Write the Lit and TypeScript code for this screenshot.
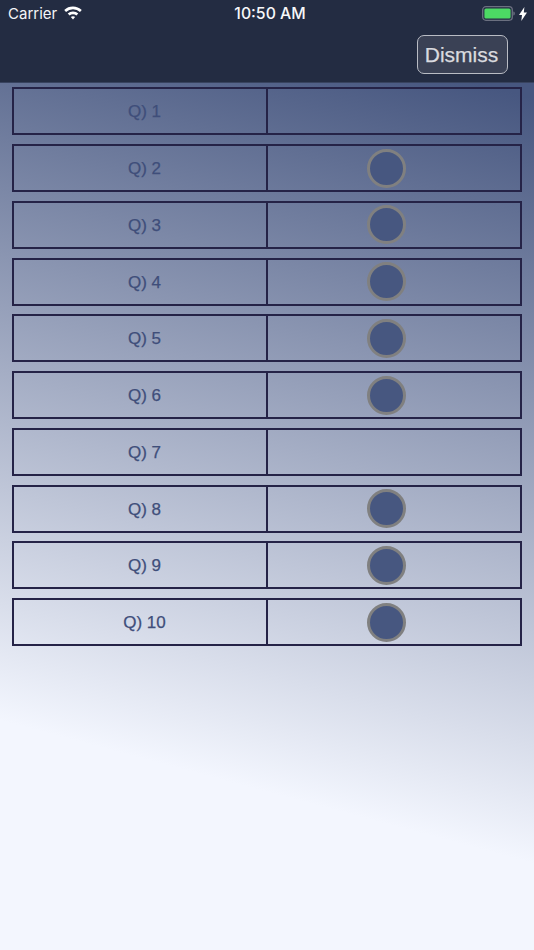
import { LitElement, html, css } from "lit";
import { customElement } from "lit/decorators.js";

const ROWS = [1, 2, 3, 4, 5, 6, 7, 8, 9, 10];
const EMPTY = new Set([1, 7]);

@customElement("app-root")
export class AppRoot extends LitElement {
  static styles = css`
    :host {
      display: block;
      width: 534px;
      height: 950px;
      overflow: hidden;
      font-family: "Liberation Sans", Arial, sans-serif;
      background: linear-gradient(195deg, #475780 0%, #475780 9%, #f3f6fe 79%, #f3f6fe 100%);
    }
    .head {
      height: 82px;
      background: #232c42;
      border-bottom: 1px solid #38435f;
      display: flex;
      flex-direction: column;
    }
    .status {
      height: 27px;
      display: flex;
      align-items: center;
      padding: 0 7px 0 8px;
      color: #fff;
      font-family: Inter, "Liberation Sans", sans-serif;
      position: relative;
    }
    .carrier {
      font-size: 15px;
      color: #f4f5f7;
    }
    .wifi {
      margin-left: 7px;
      margin-top: -1px;
    }
    .time {
      position: absolute;
      left: 6px;
      right: 0;
      text-align: center;
      font-weight: 500;
      font-size: 15.8px;
      color: #f6f7f9;
    }
    .right {
      margin-left: auto;
      display: flex;
      align-items: center;
      gap: 4px;
    }
    .navbar {
      flex: 1;
      display: flex;
      justify-content: flex-end;
      align-items: flex-start;
      padding: 8px 26px 0 0;
    }
    .dismiss {
      width: 91px;
      height: 39px;
      box-sizing: border-box;
      border: 1.5px solid #b9bcc4;
      border-radius: 7px;
      background: #3a4155;
      color: #d9dadf;
      font-family: "Liberation Sans", Arial, sans-serif;
      font-size: 21px;
      -webkit-text-stroke: 0.25px #d9dadf;
      padding: 1px 2px 0 0;
      display: flex;
      align-items: center;
      justify-content: center;
    }
    .list {
      display: flex;
      flex-direction: column;
      gap: 8.75px;
      padding: 4.4px 12px 0;
    }
    .row {
      height: 48px;
      box-sizing: border-box;
      border: 2px solid #252347;
      display: grid;
      grid-template-columns: 254px 1fr;
    }
    .q {
      border-right: 2px solid #252347;
      display: flex;
      align-items: center;
      justify-content: center;
      padding: 2px 0 0 9px;
      color: #3f4e7a;
      font-size: 17px;
      -webkit-text-stroke: 0.25px #3f4e7a;
    }
    .a {
      display: flex;
      align-items: center;
      justify-content: center;
      padding-right: 15px;
    }
    .dot {
      width: 39px;
      height: 39px;
      box-sizing: border-box;
      border-radius: 50%;
      border: 3px solid #808080;
      background: #475780;
    }
  `;

  render() {
    return html`
      <div class="head">
        <div class="status">
          <span class="carrier">Carrier</span>
          <svg class="wifi" width="18" height="14" viewBox="1 1.300 16 12">
            <path fill="#fff" d="M9 1.600c3 0 5.700 1.100 7.800 3.100l-1.600 1.700A8.900 8.900 0 0 0 9 3.900a8.900 8.900 0 0 0-6.200 2.500L1.200 4.700A11.200 11.200 0 0 1 9 1.600z"/>
            <path fill="#fff" d="M9 6c1.800 0 3.400.7 4.700 1.800l-1.700 1.700A4.600 4.600 0 0 0 9 8.300a4.600 4.600 0 0 0-3 1.200L4.300 7.800A7 7 0 0 1 9 6z"/>
            <path fill="#fff" d="M9 10.200c.8 0 1.400.3 1.900.7L9 13l-1.900-2.100c.5-.4 1.100-.7 1.900-.7z"/>
          </svg>
          <span class="time">10:50 AM</span>
          <span class="right">
            <svg width="33" height="15" viewBox="0 0 33 15">
              <rect x="0.700" y="0.700" width="29.600" height="13.600" rx="3.200" fill="none" stroke="#6b7080" stroke-width="1.300"/>
              <rect x="2.400" y="2.400" width="26.200" height="10.200" rx="1.600" fill="#4cd964"/>
              <path d="M31.300 5.500v4c1 0 1.500-.9 1.500-2s-.5-2-1.500-2z" fill="#6b7080"/>
            </svg>
            <svg width="8" height="14" viewBox="0 0 8 14">
              <path fill="#fff" d="M5.400 0 0 8h3L2.300 14 8 5.600H4.800z"/>
            </svg>
          </span>
        </div>
        <div class="navbar"><button class="dismiss">Dismiss</button></div>
      </div>
      <div class="list">
        ${ROWS.map(
          (n) => html`
            <div class="row">
              <div class="q">Q) ${n}</div>
              <div class="a">${EMPTY.has(n) ? "" : html`<div class="dot"></div>`}</div>
            </div>
          `
        )}
      </div>
    `;
  }
}
